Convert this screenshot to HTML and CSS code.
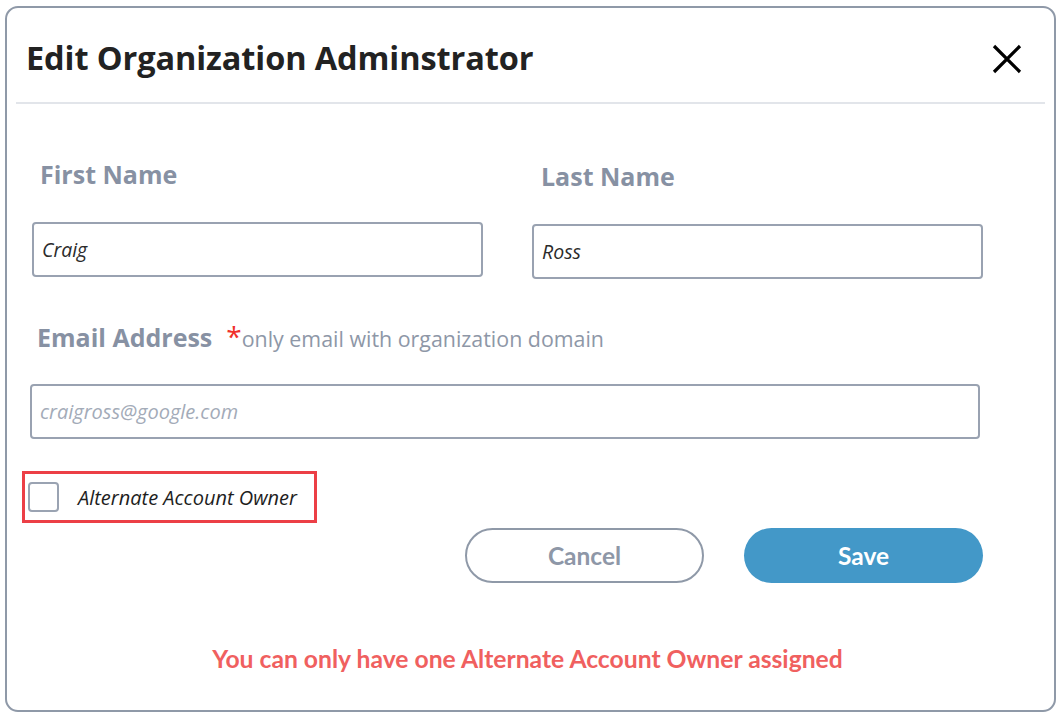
FILE: index.html
```html
<!DOCTYPE html>
<html lang="en">
<head>
<meta charset="utf-8">
<title>Edit Organization Adminstrator</title>
<link rel="stylesheet" href="styles.css">
</head>
<body>
<div class="modal">
  <div class="modal-header">
    <h1 class="modal-title">Edit Organization Adminstrator</h1>
    <button class="close-btn" aria-label="Close">
      <svg width="30" height="30" viewBox="0 0 30 30"><path d="M2 2 L28 28 M28 2 L2 28" stroke="#000" stroke-width="3.2" fill="none"/></svg>
    </button>
  </div>
  <div class="modal-body">
    <div class="name-row">
      <div class="field">
        <label class="field-label first-label">First Name</label>
        <div class="input first-input">Craig</div>
      </div>
      <div class="field last-field">
        <label class="field-label last-label">Last Name</label>
        <div class="input">Ross</div>
      </div>
    </div>
    <div class="email-field">
      <div class="email-label"><span class="field-label">Email Address</span><span class="req">*</span><span class="hint">only email with organization domain</span></div>
      <div class="input email-input placeholder">craigross@google.com</div>
    </div>
    <div class="check-row">
      <div class="check-box-wrap">
        <span class="checkbox"></span>
        <span class="check-label">Alternate Account Owner</span>
      </div>
    </div>
    <div class="actions">
      <button class="btn btn-cancel">Cancel</button>
      <button class="btn btn-save">Save</button>
    </div>
    <p class="error">You can only have one Alternate Account Owner assigned</p>
  </div>
</div>
</body>
</html>
```
FILE: styles.css
```css
* { box-sizing: border-box; }
html, body { margin: 0; padding: 0; background: #fff; }
body { font-family: "Open Sans", "DejaVu Sans", sans-serif; }

.modal {
  margin: 6px 0 0 5px;
  width: 1051px;
  height: 706px;
  border: 2px solid #8f99a8;
  border-radius: 13px;
  background: #fff;
}

.modal-header {
  display: flex;
  align-items: center;
  justify-content: space-between;
  height: 96px;
  margin: 0 9px 0 9px;
  padding: 4px 23px 0 10px;
  border-bottom: 2px solid #e2e5ea;
}
.modal-title {
  margin: 0;
  font-size: 32.5px;
  font-weight: 700;
  color: #222;
  letter-spacing: -0.1px;
}
.close-btn {
  border: none;
  background: none;
  padding: 0;
  margin-top: 4px;
  width: 30px;
  height: 30px;
  cursor: pointer;
  display: flex;
}

.modal-body {
  padding: 0 0 0 25px;
}

.name-row {
  display: grid;
  grid-template-columns: 451px 451px;
  column-gap: 49px;
  margin-top: 54px;
}
.field { display: flex; flex-direction: column; }
.last-field { margin-top: 2px; }
.field-label {
  font-size: 25px;
  font-weight: 700;
  color: #8791a3;
  line-height: 32px;
  padding-left: 8px;
}
.first-label { margin-bottom: 32px; }
.last-label { margin-bottom: 32px; padding-left: 9px; }

.input {
  height: 55px;
  border: 2px solid #99a2b1;
  border-radius: 4px;
  display: flex;
  align-items: center;
  padding-left: 8px;
  font-style: italic;
  font-size: 19.5px;
  color: #2b2b2b;
}
.placeholder { color: #a3abb8; font-size: 20px; }

.email-field { margin-top: 41px; margin-left: -2px; }
.email-label { display: flex; align-items: baseline; height: 32px; line-height: 32px; margin-bottom: 32px; }
.email-label .field-label { padding-left: 7px; }
.req { color: #f0302c; font-size: 28px; margin-left: 14px; line-height: 32px; }
.hint { color: #8e97a7; font-size: 21.4px; }
.email-input { width: 950px; }

.check-row { margin-top: 32px; margin-left: -10px; }
.check-box-wrap {
  display: inline-flex;
  align-items: center;
  width: 295px;
  height: 52px;
  border: 3px solid #ec3f46;
  padding-left: 3px;
}
.checkbox {
  width: 31px;
  height: 30px;
  border: 2px solid #9aa3b2;
  border-radius: 4px;
  display: inline-block;
}
.check-label {
  margin-left: 19px;
  font-style: italic;
  font-size: 20px;
  color: #1e1e1e;
}

.actions {
  display: flex;
  gap: 40px;
  margin-top: 5px;
  margin-left: 433px;
}
.btn {
  width: 239px;
  height: 55px;
  border-radius: 28px;
  font-family: "Lato", "Open Sans", sans-serif;
  font-weight: 700;
  font-size: 24.5px;
  cursor: pointer;
}
.btn-cancel {
  background: #fff;
  border: 2px solid #8f99a8;
  color: #8e97a7;
}
.btn-save {
  background: #4398c8;
  border: none;
  color: #fff;
}

.error {
  margin: 61px 0 0 -31px;
  text-align: center;
  font-family: "Lato", "Open Sans", sans-serif;
  font-weight: 700;
  font-size: 24.7px;
  color: #f0605f;
}
```
